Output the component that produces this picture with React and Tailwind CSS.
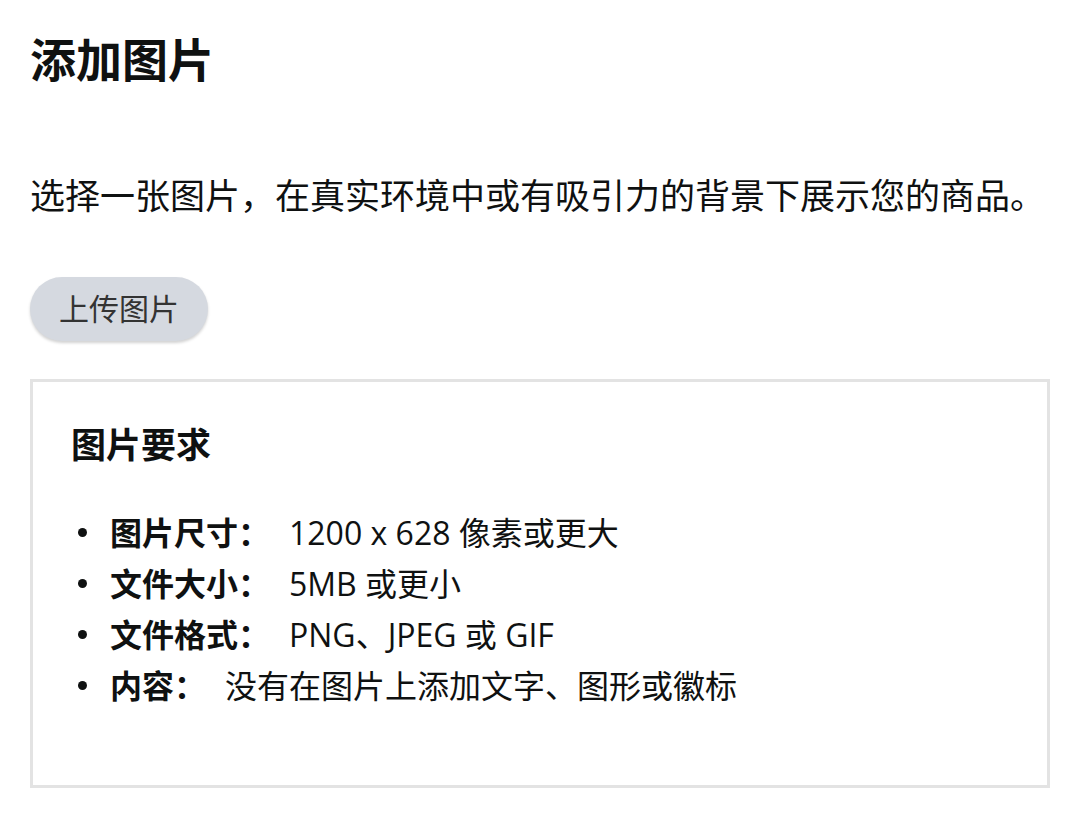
const FONT = { fontFamily: '"Open Sans", "Noto Sans CJK SC", sans-serif' };

const REQUIREMENTS = [
  { label: '图片尺寸：', value: '1200 x 628 像素或更大' },
  { label: '文件大小：', value: '5MB 或更小' },
  { label: '文件格式：', value: 'PNG、JPEG 或 GIF' },
  { label: '内容：', value: '没有在图片上添加文字、图形或徽标' },
];

const App = () => {
  return (
    <div className="bg-white min-h-[821px] w-[1080px] text-[#0f1111] pl-[30px] pt-[31px]" style={FONT}>
      {/* Header */}
      <h1 className="text-[46px] leading-[56px] font-bold">添加图片</h1>
      <p className="mt-[87px] text-[35px] leading-[44px] whitespace-nowrap">
        选择一张图片，在真实环境中或有吸引力的背景下展示您的商品。
      </p>

      <button className="mt-[59px] h-[64px] px-[29px] rounded-full bg-[#d5d9e0] text-[#333] text-[30px] leading-none shadow-[0_2px_3px_rgba(0,0,0,0.18)]">
        上传图片
      </button>

      {/* Requirements box */}
      <div className="mt-[38px] w-[1020px] h-[409px] border-[3px] border-[#e3e3e3] pl-[38px] pt-[41px]">
        <h3 className="text-[35px] leading-[44px] font-bold">图片要求</h3>
        <ul className="mt-[40px]">
          {REQUIREMENTS.map((r) => (
            <li key={r.label} className="flex items-center h-[51px] text-[32px]">
              <span className="w-[9px] h-[9px] rounded-full bg-[#0f1111] ml-[7px] mr-[23px] shrink-0" />
              <span className="font-bold">{r.label}</span>
              <span className="ml-[19px]">{r.value}</span>
            </li>
          ))}
        </ul>
      </div>
    </div>
  );
};

export default App;
